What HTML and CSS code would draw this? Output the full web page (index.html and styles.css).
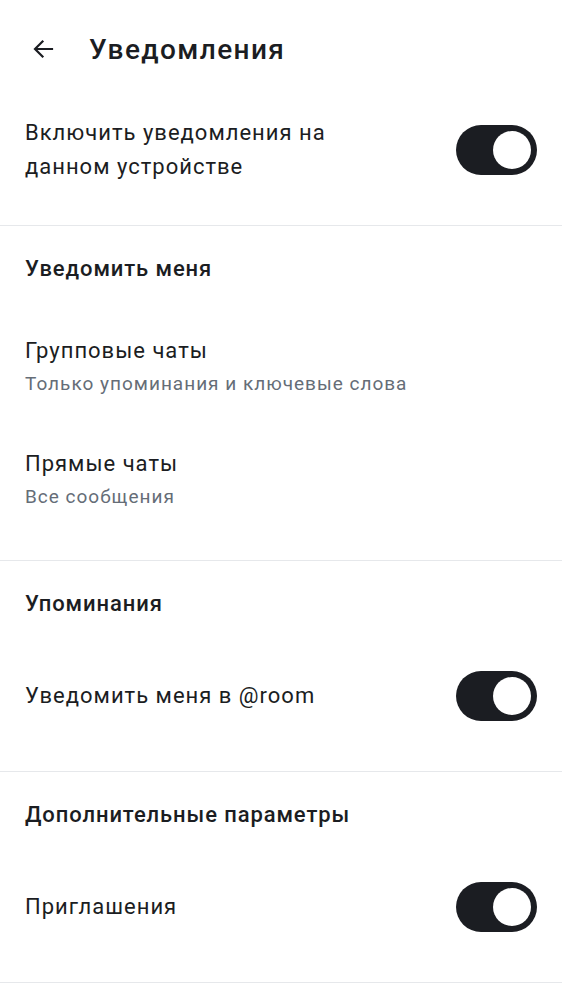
FILE: index.html
```html
<!DOCTYPE html>
<html lang="ru">
<head>
<meta charset="utf-8">
<link rel="stylesheet" href="styles.css">
</head>
<body>
<div class="screen">
  <header class="topbar">
    <svg class="back" width="24" height="24" viewBox="0 0 24 24"><path d="M21 12H4.5M11.5 4.5L4 12l7.5 7.5" fill="none" stroke="#1b1d22" stroke-width="2.2" stroke-linecap="square"/></svg>
    <h1 class="title">Уведомления</h1>
  </header>

  <section class="section first">
    <div class="row row-main">
      <div class="label wrap">Включить уведомления на данном устройстве</div>
      <div class="toggle"><span class="knob"></span></div>
    </div>
  </section>

  <section class="section">
    <div class="section-title">Уведомить меня</div>
    <div class="row row-two">
      <div class="texts">
        <div class="label">Групповые чаты</div>
        <div class="sub">Только упоминания и ключевые слова</div>
      </div>
    </div>
    <div class="row row-two">
      <div class="texts">
        <div class="label">Прямые чаты</div>
        <div class="sub">Все сообщения</div>
      </div>
    </div>
  </section>

  <section class="section">
    <div class="section-title">Упоминания</div>
    <div class="row row-one">
      <div class="label">Уведомить меня в @room</div>
      <div class="toggle"><span class="knob"></span></div>
    </div>
  </section>

  <section class="section">
    <div class="section-title">Дополнительные параметры</div>
    <div class="row row-one">
      <div class="label">Приглашения</div>
      <div class="toggle"><span class="knob"></span></div>
    </div>
  </section>
</div>
</body>
</html>
```

FILE: styles.css
```css
* { box-sizing: border-box; }
html, body { margin: 0; padding: 0; background: #ffffff; }
body {
  font-family: Roboto, "Noto Sans", "Liberation Sans", sans-serif;
  color: #1b1d22;
}
.screen { width: 562px; }

.topbar {
  height: 98px;
  display: flex;
  align-items: center;
  padding-left: 31px;
  gap: 34px;
}
.back { width: 24px; height: 24px; flex: none; }
.title {
  margin: 0;
  font-size: 28px;
  font-weight: 500;
  letter-spacing: 1.4px;
}

.section {
  border-bottom: 1px solid #e6e8eb;
  padding-bottom: 24px;
}
.section.first { padding-bottom: 23px; }

.section-title {
  height: 84px;
  display: flex;
  align-items: center;
  padding: 0 25px;
  font-size: 22px;
  font-weight: 500;
  letter-spacing: 0.9px;
}

.row {
  display: flex;
  align-items: center;
  justify-content: space-between;
  padding: 0 25px;
}
.row-main { height: 104px; }
.row-two { height: 113px; }
.row-one { height: 102px; }

.label {
  font-size: 22px;
  line-height: 34px;
  font-weight: 400;
  letter-spacing: 1px;
}
.label.wrap { width: 370px; }
.sub {
  font-size: 19px;
  line-height: 31px;
  color: #656d77;
  letter-spacing: 1px;
}

.toggle {
  width: 81px;
  height: 50px;
  border-radius: 25px;
  background: #1b1d22;
  display: flex;
  align-items: center;
  justify-content: flex-end;
  padding-right: 6px;
  flex: none;
}
.knob {
  width: 38px;
  height: 38px;
  border-radius: 50%;
  background: #ffffff;
}
```
